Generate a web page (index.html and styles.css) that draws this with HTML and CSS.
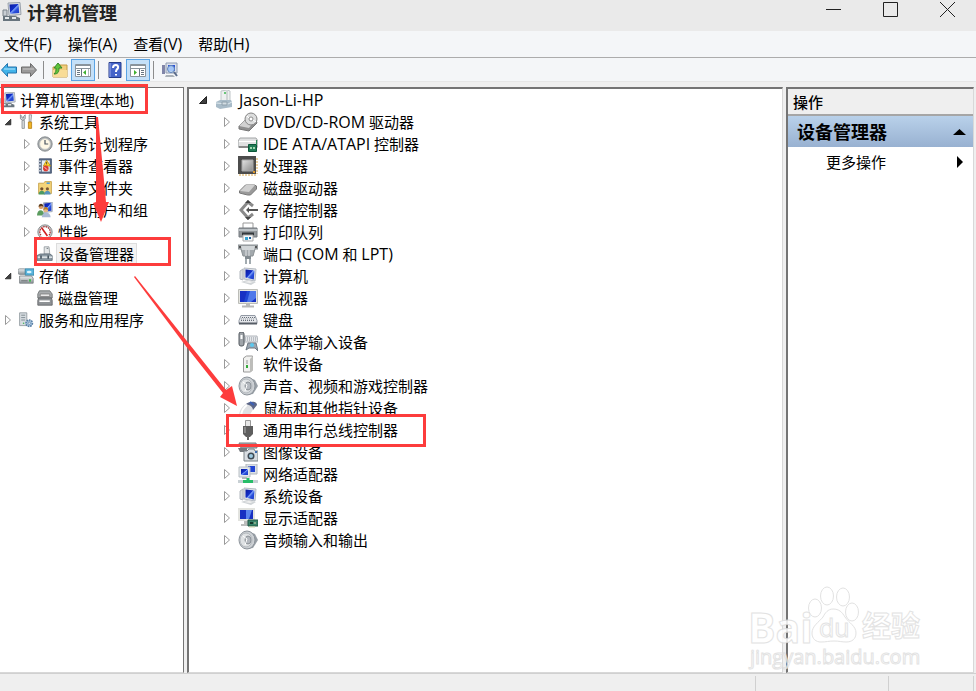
FILE: index.html
```html
<!DOCTYPE html>
<html lang="zh-CN">
<head>
  <meta charset="UTF-8">
  <meta name="viewport" content="width=device-width, initial-scale=1.0">
  <title>计算机管理</title>
  <link rel="stylesheet" href="styles.css">
</head>
<body>
  <!-- 图标定义 -->
  <svg class="icon-defs" aria-hidden="true">
    <defs>
      <linearGradient id="screen" x1="0" y1="0" x2="1" y2="1">
        <stop offset="0" stop-color="#0a1a98"/><stop offset="0.45" stop-color="#1230cc"/><stop offset="0.5" stop-color="#7fa4f8"/><stop offset="0.65" stop-color="#2a50dc"/><stop offset="1" stop-color="#1a38c4"/>
      </linearGradient>
      <linearGradient id="metal" x1="0" y1="0" x2="0" y2="1">
        <stop offset="0" stop-color="#eef0f1"/><stop offset="1" stop-color="#8b9296"/>
      </linearGradient>
      <linearGradient id="chip" x1="0" y1="0" x2="1" y2="1">
        <stop offset="0" stop-color="#e4e4e4"/><stop offset="1" stop-color="#8a8a8a"/>
      </linearGradient>
    </defs>
    <symbol id="i-closed" viewBox="0 0 8 12"><path d="M1.5 1.5v9l5-4.500z" fill="#fff" stroke="#9a9a9a"/></symbol>
    <symbol id="i-open" viewBox="0 0 10 10"><path d="M8.500 1.500v7h-7z" fill="#404040" stroke="#222"/></symbol>
    <symbol id="i-computer" viewBox="0 0 20 20">
      <path d="M6 1l12-.5 1 12-12 1z" fill="#d7dce2" stroke="#9aa2ac"/><path d="M7.500 2.500l9-.500.7 9-9 .8z" fill="url(#screen)"/>
      <path d="M10 13h4l1 2h-5z" fill="#aab0b6"/>
      <path d="M1 8h4v6H1z" fill="#c9ced3" stroke="#7a838b"/><path d="M1 14h12l5 2v3H1z" fill="#68747d"/><path d="M3 15h4v2H3zM10 15h4v2h-4z" fill="#e4e8ea"/>
    </symbol>
    <symbol id="i-pc" viewBox="0 0 20 20">
      <path d="M6 2l12 1-1 12-11-2z" fill="#dfe3e8" stroke="#b4bac2"/><path d="M7.500 3.500l9 1-.700 9-8.300-2z" fill="url(#screen)"/>
      <path d="M2 5l3-2v11l-3-1z" fill="#d8dcdf" stroke="#b2b8be"/><path d="M3 16l6-2 9 2-5 3z" fill="#cfd3d6"/><path d="M6 16l5-1 4 1-3 1z" fill="#f1f1f1"/>
    </symbol>
    <symbol id="i-tools" viewBox="0 0 20 20">
      <path d="M3 1v5l3 2 3-2V1L7 3v2H5V3z" fill="#dcdfe1" stroke="#7a8085"/><path d="M5 8h3v10H5z" fill="#d8dbde" stroke="#868c91"/>
      <path d="M14 1h3l-1 9h-2z" fill="#e7e9ea" stroke="#85898c"/><path d="M13 10h4v8h-4z" fill="#efb526" stroke="#b77d10"/>
    </symbol>
    <symbol id="i-clock" viewBox="0 0 20 20">
      <circle cx="10" cy="10" r="9" fill="#a9adb0" stroke="#777c80"/><circle cx="10" cy="10" r="6.500" fill="#fff8e6" stroke="#d5d5cf"/><path d="M10 5v5h4" fill="none" stroke="#4b5560" stroke-width="1.500"/>
    </symbol>
    <symbol id="i-event" viewBox="0 0 20 20">
      <path d="M3 1h15v18H3z" fill="#5c6d88" stroke="#3d4d68"/><path d="M6 3h10v14H6z" fill="#e8edf4"/><path d="M2 4h3M2 8h3M2 12h3M2 16h3" stroke="#c7cdd6" stroke-width="2"/>
      <path d="M12 3l5 7H8z" fill="#ffd633" stroke="#b88b00"/><path d="M12 5v3" stroke="#333"/><circle cx="11" cy="13" r="3.500" fill="#dc3d35"/><path d="M9.500 11.500l3 3" stroke="#fff"/>
    </symbol>
    <symbol id="i-share" viewBox="0 0 20 20">
      <path d="M2 4h6l2-2h8v15H2z" fill="#f4d47a" stroke="#c19b3d"/><path d="M12 4h4" stroke="#4b9cd8" stroke-width="2"/>
      <circle cx="6" cy="11" r="2" fill="#705030"/><path d="M2 18c0-6 8-6 8 0z" fill="#4d9a62"/><circle cx="13" cy="11" r="2" fill="#7a5838"/><path d="M9 18c0-6 8-6 8 0z" fill="#5793bc"/>
    </symbol>
    <symbol id="i-users" viewBox="0 0 20 20">
      <path d="M8 1l11-1v12l-10 1z" fill="#d8dde4" stroke="#8f9cae"/><path d="M9 2l9-1v10l-8 1z" fill="url(#screen)"/>
      <circle cx="5" cy="6" r="3" fill="#d9a06c"/><path d="M2 6c0-5 6-5 6 0l-2-1z" fill="#5b3c1c"/><path d="M0 17c0-9 9-9 9 0z" fill="#5b9c5f"/>
      <circle cx="11" cy="10" r="3" fill="#e5b684"/><path d="M8 10c0-5 6-5 6 0l-3-1z" fill="#b78228"/><path d="M6 19c0-8 11-8 11 0z" fill="#a9b9d4"/>
    </symbol>
    <symbol id="i-perf" viewBox="0 0 20 20">
      <circle cx="10" cy="10" r="9" fill="#c4c7c8" stroke="#7c8083"/><circle cx="10" cy="10" r="7" fill="#fff"/><path d="M5 14a6.500 6.500 0 1 1 10 0" fill="none" stroke="#a53030" stroke-width="1.500" stroke-dasharray="2 1"/><path d="M6 5l7 10" stroke="#d21e1e" stroke-width="2"/>
    </symbol>
    <symbol id="i-device" viewBox="0 0 20 20">
      <path d="M9 1h6l1 9H9z" fill="#e5e8e9" stroke="#8e9599"/><path d="M12 3h2" stroke="#5b6469"/><path d="M0 12l4-2h12l3 2v6H0z" fill="#8e9ca6" stroke="#596873"/><path d="M1 14h18" stroke="#dce2e5" stroke-width="2"/><path d="M5 12v4M14 12v4" stroke="#475661" stroke-width="2"/>
    </symbol>
    <symbol id="i-storage" viewBox="0 0 20 20">
      <rect x="0" y="1" width="10" height="7" rx="2" fill="url(#metal)" stroke="#858b8f"/><path d="M9 1h11v8H9z" fill="#58b4dc" stroke="#327e9f"/><ellipse cx="14" cy="5" rx="3" ry="1.500" fill="#d9f3fd"/>
      <path d="M2 10h15l2 3v6H2z" fill="url(#metal)" stroke="#777d81"/><path d="M4 16h8" stroke="#5c6266"/><rect x="14" y="14" width="2" height="3" fill="#27bd38"/>
    </symbol>
    <symbol id="i-disks" viewBox="0 0 20 20">
      <path d="M3 1h13l3 4v5H1V5z" fill="#a8abad" stroke="#66696b"/><path d="M4 5h12v3H4z" fill="#f4f4f4" stroke="#777"/><path d="M2 10h16l1 3v6H1v-6z" fill="#8f9396" stroke="#5d6062"/><path d="M3 14h13" stroke="#fff" stroke-width="2"/>
    </symbol>
    <symbol id="i-services" viewBox="0 0 20 20">
      <path d="M2 1h9v16H2z" fill="#d7dde1" stroke="#899298"/><path d="M4 4h5M4 7h5M4 10h5" stroke="#6f7b83"/><circle cx="7" cy="14" r="1" fill="#42b45a"/>
      <circle cx="14" cy="14" r="4" fill="#a8c6e2" stroke="#597fa4" stroke-width="2" stroke-dasharray="2 1"/><circle cx="14" cy="14" r="1.500" fill="#fff" stroke="#597fa4"/>
    </symbol>
    <symbol id="i-host" viewBox="0 0 20 20">
      <path d="M7 1l6-1 3 1v12H7z" fill="#eef0f0" stroke="#c0c6c8"/><path d="M13 1v11" stroke="#b4babb"/><circle cx="11" cy="3" r="1" fill="#3eb850"/><path d="M2 12l4-2h11l1 2v5l-12 2-4-2z" fill="#a8bbc8"/><path d="M2 13l12 1 4-2" stroke="#dfe9ee" fill="none"/><path d="M8 12h5v3H8z" fill="#d3dde3" stroke="#8ea0ac"/>
    </symbol>
    <symbol id="i-dvd" viewBox="0 0 20 20">
      <path d="M1 14l6-6h11l1 3-6 6-2 2-10-2z" fill="#8f8f8f" stroke="#777"/><path d="M1 14l6-6h10l-6 8z" fill="#d2d2d2"/><circle cx="13" cy="7" r="6" fill="#dcdddd" stroke="#858585"/><circle cx="13" cy="7" r="2" fill="#fff" stroke="#8d8d8d"/><path d="M9 4l2 2M15 8l3 2" stroke="#fff"/>
    </symbol>
    <symbol id="i-ide" viewBox="0 0 20 20">
      <path d="M2 4h16l2 3v6H0V7z" fill="#e0e1e2" stroke="#a2a5a6"/><path d="M1 7.500h18" stroke="#fff"/><path d="M1 13h9" stroke="#888" stroke-width="2"/><path d="M10.500 10.500h8v7h-8z" fill="#207c55" stroke="#0d573a"/><path d="M12 13h2v2h-2zM15 13h2v2h-2z" fill="#9fd7ae"/><path d="M18.500 6v5" stroke="#2a8a58"/>
    </symbol>
    <symbol id="i-cpu" viewBox="0 0 20 20">
      <path d="M1 19h17M19 2v16" stroke="#d8a64a" stroke-dasharray="2 1"/><path d="M0 0h18v18H0z" fill="#4c4c4c"/><path d="M4 4h11v11H4z" fill="url(#chip)" stroke="#a8a8a8"/><path d="M15 15h2v2h-2z" fill="#dc972b"/>
    </symbol>
    <symbol id="i-drive" viewBox="0 0 20 20">
      <path d="M1.500 13l6-6h9l2 1v3l-6 6h-3l-8-2z" fill="#9a9a9a" stroke="#777"/><path d="M2 13l6-6h9l-6 7z" fill="#d0d0d0"/>
    </symbol>
    <symbol id="i-controller" viewBox="0 0 20 20">
      <path d="M15 6l-5-4-7 8 7 8 5-4" fill="none" stroke="#8a8a8a" stroke-width="3"/><path d="M9 10h11" stroke="#555" stroke-width="2"/><path d="M7 3h6l-3-3zM7 17h6l-3 3z" fill="#444"/><path d="M8 10l3-3v6z" fill="#555"/>
    </symbol>
    <symbol id="i-printer" viewBox="0 0 20 20">
      <path d="M5 1h10v8H5z" fill="#fff" stroke="#999"/><path d="M1 6h18v9H1z" fill="#92979b" stroke="#757b80"/><path d="M1 8h18" stroke="#bcc2c6" stroke-width="2"/><path d="M4 12h12" stroke="#33383c" stroke-width="3"/><path d="M5 13h10v6H5z" fill="#f6f8fa" stroke="#aaa"/><path d="M7 15h3v3H7z" fill="#38a3d1"/><path d="M11 15h2v2h-2z" fill="#225f99"/>
    </symbol>
    <symbol id="i-port" viewBox="0 0 20 20">
      <path d="M0 1h20v4h-3l-2 7H5L3 5H0z" fill="#a3a9ad" stroke="#8b9194"/><path d="M3 2h14l-1 4H4z" fill="#d2d6d8"/><path d="M1 3h2M17 3h2" stroke="#555" stroke-width="2"/><path d="M7 12h6v3H7z" fill="#838b90"/><path d="M8 15v5M12 15v5" stroke="#a2abb0" stroke-width="2"/><path d="M8 6v6M11 6v6" stroke="#e2e4e6"/>
    </symbol>
    <symbol id="i-monitor" viewBox="0 0 20 20">
      <path d="M.500 1.500h19v14H.500z" fill="#e3e4e0" stroke="#bcbdb8"/><path d="M2 3h16v11H2z" fill="#1730c4"/><path d="M9 3h9v7l-5 4H9z" fill="#4f78ea"/><path d="M12 3l-3 11h-3l3-11z" fill="#2148d4"/><path d="M8 16h4v2H8z" fill="#bbb"/><path d="M4 18.500h12" stroke="#b8b8b8" stroke-width="2"/>
    </symbol>
    <symbol id="i-keyboard" viewBox="0 0 20 20">
      <path d="M3 5.500h14l2 5v3H1v-3z" fill="#e4e6ea" stroke="#9299a4"/><path d="M1 13.500h18" stroke="#565d66" stroke-width="2"/><path d="M4 7.500h13M3 10.500h14" stroke="#666e78" stroke-dasharray="1 1"/><path d="M3 9h13" stroke="#8d949d" stroke-dasharray="1 1"/>
    </symbol>
    <symbol id="i-hid" viewBox="0 0 20 20">
      <path d="M6 4h13l1 6H6z" fill="#e5e7ea" stroke="#b0b5bb"/><path d="M7 6h12M7 8h12" stroke="#8d959e" stroke-dasharray="1 1"/><rect x="1" y="0" width="5" height="14" rx="2" fill="#a0a5aa" stroke="#555b60"/><path d="M3.500 3v4" stroke="#fff" stroke-width="2"/>
      <path d="M8 18l2-7h8l2 8-3-3h-6z" fill="#9aa6b1" stroke="#6e7882"/><circle cx="14" cy="13" r="2" fill="#5cc8ee"/>
    </symbol>
    <symbol id="i-software" viewBox="0 0 20 20">
      <path d="M5.500 4l3-2h6v14l-2 2h-7z" fill="#f1f1ef" stroke="#999"/><path d="M12 5l3-3v14l-3 2z" fill="#bdbdba"/><path d="M8 7h2M8 9h2" stroke="#999"/><path d="M9 11v3" stroke="#35aa3b" stroke-width="2"/>
    </symbol>
    <symbol id="i-speaker" viewBox="0 0 20 20">
      <path d="M10 1l7 3 3 6-5 8-6 1z" fill="#9aa1a8"/><ellipse cx="9" cy="10" rx="8" ry="9" fill="#cdd1d5" stroke="#8b9299"/><ellipse cx="8" cy="10" rx="6" ry="7" fill="#dfe2e4" stroke="#b3b8bd"/><ellipse cx="10" cy="10" rx="3" ry="4" fill="#b4b9bf" stroke="#8c9298"/><path d="M5 6l4 3-2 6" stroke="#fff" fill="none"/>
    </symbol>
    <symbol id="i-mouse" viewBox="0 0 20 20">
      <path d="M1 18c0-6 4-11 9-13l6 5-5 8z" fill="#dfe1e4"/><path d="M8 6c4-3 11-3 11 1l-4 5c0-3-3-5-7-6z" fill="#5c6686"/><path d="M12 4l4 3" stroke="#3c5fb4" stroke-width="2"/><path d="M3 17c1-5 3-8 6-10" stroke="#fff" fill="none" stroke-width="2"/>
    </symbol>
    <symbol id="i-usb" viewBox="0 0 20 20">
      <path d="M7.500.500h5v6h-5z" fill="#e7e7e7" stroke="#999"/><path d="M5 6h10v8l-3 3H8l-3-3z" fill="#5e5e5e"/><path d="M7 7v6" stroke="#888" stroke-width="2"/><path d="M10 16v4" stroke="#666" stroke-width="2"/>
    </symbol>
    <symbol id="i-imaging" viewBox="0 0 20 20">
      <path d="M1 1h17l1 5H3z" fill="#aeb2b6" stroke="#777d82"/><path d="M0 6h9v4H2z" fill="#74797e"/><path d="M6 9h3l2-2h5l1 2h3v10H6z" fill="#d8dde2" stroke="#7b8287"/><circle cx="13" cy="14" r="3.500" fill="#3e4953"/><circle cx="13" cy="14" r="2" fill="#9ec9e0"/><path d="M17 10h2" stroke="#3d6cb1" stroke-width="2"/>
    </symbol>
    <symbol id="i-network" viewBox="0 0 20 20">
      <path d="M8 0h11v10H8z" fill="#dce1e6" stroke="#b1b7be"/><path d="M10 2h7v6h-7z" fill="#2245d4"/><path d="M1 3h11v10H1z" fill="#e4e8eb" stroke="#b8bfc5"/><path d="M3 5h7v6H3z" fill="url(#screen)"/><path d="M4 13h5v2H4z" fill="#b4b9bd"/><path d="M0 17.500h20" stroke="#c8d0d4" stroke-width="3"/><path d="M5 17.500h10M10 14v3" stroke="#27bd68" stroke-width="3"/>
    </symbol>
    <symbol id="i-display" viewBox="0 0 20 20">
      <path d="M0 0h17v13H0z" fill="#e2e3df"/><path d="M2 2h13v9H2z" fill="#1830c2"/><path d="M8 2h6l-3 9H8z" fill="#5a84ee"/><path d="M6 13h5v3H6zM3 16h8v2H3z" fill="#bcbebd"/><path d="M10 12h10v6H10z" fill="#39836a" stroke="#245a46"/><path d="M12 14h3v2h-3z" fill="#16382c"/><path d="M16 15h2M11 19h6" stroke="#d3d6ab"/>
    </symbol>
    <symbol id="i-back" viewBox="0 0 16 16"><path d="M.500 8l6-6.500v3.500h9v6h-9v3.500z" fill="#42b4ea" stroke="#2373ac"/><path d="M3 7h11" stroke="#b8e5fb"/></symbol>
    <symbol id="i-forward" viewBox="0 0 16 16"><path d="M15.500 8l-6-6.500v3.500h-9v6h9v3.500z" fill="#9a9a9a" stroke="#6c6c6c"/><path d="M2 7h11" stroke="#c8c8c8"/></symbol>
    <symbol id="i-folder" viewBox="0 0 16 16"><path d="M1 5h5l1-2h8v12H1z" fill="#f0ce7e" stroke="#c69b45"/><path d="M1 8h14v7H1z" fill="#f8dc98"/><path d="M2 12c4 0 5-2 5-6h3L6 1 2 6h2c0 3 0 4-2 6z" fill="#5ec43b" stroke="#35882a"/></symbol>
    <symbol id="i-pane-left" viewBox="0 0 16 16"><path d="M.500 2.500h15v12H.500z" fill="#fff" stroke="#8a949c"/><path d="M1 3.500h14M1 6.500h14" stroke="#89939b"/><path d="M6.500 7v7M2 8.500h3M2 10.500h3M2 12.500h3" stroke="#687681"/><path d="M11 8v5l-3-2.500z" fill="#3faf30"/><path d="M13.500 7v7" stroke="#b2b9be"/></symbol>
    <symbol id="i-pane-right" viewBox="0 0 16 16"><path d="M.500 2.500h15v12H.500z" fill="#fff" stroke="#8a949c"/><path d="M1 3.500h14M1 6.500h14" stroke="#89939b"/><path d="M9.500 7v7M11 8.500h3M11 10.500h3M11 12.500h3" stroke="#687681"/><path d="M4 8v5l3-2.500z" fill="#3faf30"/></symbol>
    <symbol id="i-help" viewBox="0 0 16 16"><path d="M2 .500h12v15H2z" fill="#4564c9" stroke="#253c8b"/><path d="M3 1v14" stroke="#9cacee"/><path d="M6 6c0-4 6-4 5 0-1 2-2 1-2 4M9 12v1.500" fill="none" stroke="#fff" stroke-width="2"/></symbol>
    <symbol id="i-scan" viewBox="0 0 16 16"><path d="M4 1h11v10H4z" fill="#dbe1ec" stroke="#8f9bb0"/><path d="M6 3h7v6H6z" fill="#2b50d6"/><path d="M0 3h3v9H0z" fill="#8085a8"/><path d="M4 13h7l2 2H3z" fill="#aab1b8"/><circle cx="9" cy="7" r="3.500" fill="#c3e2ff" fill-opacity=".8" stroke="#5d82b9"/><path d="M12 10l3 4" stroke="#5c6d8b" stroke-width="2"/></symbol>
  </svg>

  <div class="window">
    <header class="titlebar">
      <svg class="icon"><use href="#i-computer"/></svg>
      <h1 class="title">计算机管理</h1>
      <div class="controls">
        <button aria-label="最小化"><svg class="control"><path d="M0 9.500h15"/></svg></button>
        <button aria-label="最大化"><svg class="control"><path d="M.500 2.500h14v14H.500z"/></svg></button>
        <button aria-label="关闭"><svg class="control"><path d="M0 2l15 15M15 2L0 17"/></svg></button>
      </div>
    </header>

    <nav class="menubar">
      <button>文件<span class="latin">(F)</span></button>
      <button>操作<span class="latin">(A)</span></button>
      <button>查看<span class="latin">(V)</span></button>
      <button>帮助<span class="latin">(H)</span></button>
    </nav>

    <div class="toolbar">
      <button class="tool" aria-label="后退"><svg><use href="#i-back"/></svg></button>
      <button class="tool" aria-label="前进"><svg><use href="#i-forward"/></svg></button>
      <span class="separator"></span>
      <button class="tool" aria-label="向上"><svg><use href="#i-folder"/></svg></button>
      <button class="tool active" aria-label="控制台树"><svg><use href="#i-pane-left"/></svg></button>
      <span class="separator"></span>
      <button class="tool" aria-label="帮助"><svg><use href="#i-help"/></svg></button>
      <button class="tool active" aria-label="操作窗格"><svg><use href="#i-pane-right"/></svg></button>
      <span class="separator"></span>
      <button class="tool" aria-label="扫描"><svg><use href="#i-scan"/></svg></button>
    </div>

    <main class="panes">
      <!-- 控制台树 -->
      <ul class="pane tree console-tree">
        <li class="root"><svg class="icon"><use href="#i-computer"/></svg>计算机管理(本地)</li>
        <li><svg class="arrow"><use href="#i-open"/></svg><svg class="icon"><use href="#i-tools"/></svg>系统工具</li>
        <li class="child"><svg class="arrow"><use href="#i-closed"/></svg><svg class="icon"><use href="#i-clock"/></svg>任务计划程序</li>
        <li class="child"><svg class="arrow"><use href="#i-closed"/></svg><svg class="icon"><use href="#i-event"/></svg>事件查看器</li>
        <li class="child"><svg class="arrow"><use href="#i-closed"/></svg><svg class="icon"><use href="#i-share"/></svg>共享文件夹</li>
        <li class="child"><svg class="arrow"><use href="#i-closed"/></svg><svg class="icon"><use href="#i-users"/></svg>本地用户和组</li>
        <li class="child"><svg class="arrow"><use href="#i-closed"/></svg><svg class="icon"><use href="#i-perf"/></svg>性能</li>
        <li class="child"><svg class="arrow"></svg><svg class="icon"><use href="#i-device"/></svg><span class="selected">设备管理器</span></li>
        <li><svg class="arrow"><use href="#i-open"/></svg><svg class="icon"><use href="#i-storage"/></svg>存储</li>
        <li class="child"><svg class="arrow"></svg><svg class="icon"><use href="#i-disks"/></svg>磁盘管理</li>
        <li><svg class="arrow"><use href="#i-closed"/></svg><svg class="icon"><use href="#i-services"/></svg>服务和应用程序</li>
      </ul>

      <!-- 设备列表 -->
      <ul class="pane tree device-tree">
        <li><svg class="arrow"><use href="#i-open"/></svg><svg class="icon"><use href="#i-host"/></svg><span class="latin">Jason-Li-HP</span></li>
        <li class="child"><svg class="arrow"><use href="#i-closed"/></svg><svg class="icon"><use href="#i-dvd"/></svg><span><span class="latin">DVD/CD-ROM</span> 驱动器</span></li>
        <li class="child"><svg class="arrow"><use href="#i-closed"/></svg><svg class="icon"><use href="#i-ide"/></svg><span><span class="latin">IDE ATA/ATAPI</span> 控制器</span></li>
        <li class="child"><svg class="arrow"><use href="#i-closed"/></svg><svg class="icon"><use href="#i-cpu"/></svg>处理器</li>
        <li class="child"><svg class="arrow"><use href="#i-closed"/></svg><svg class="icon"><use href="#i-drive"/></svg>磁盘驱动器</li>
        <li class="child"><svg class="arrow"><use href="#i-closed"/></svg><svg class="icon"><use href="#i-controller"/></svg>存储控制器</li>
        <li class="child"><svg class="arrow"><use href="#i-closed"/></svg><svg class="icon"><use href="#i-printer"/></svg>打印队列</li>
        <li class="child"><svg class="arrow"><use href="#i-closed"/></svg><svg class="icon"><use href="#i-port"/></svg><span>端口 <span class="latin">(COM</span> 和 <span class="latin">LPT)</span></span></li>
        <li class="child"><svg class="arrow"><use href="#i-closed"/></svg><svg class="icon"><use href="#i-pc"/></svg>计算机</li>
        <li class="child"><svg class="arrow"><use href="#i-closed"/></svg><svg class="icon"><use href="#i-monitor"/></svg>监视器</li>
        <li class="child"><svg class="arrow"><use href="#i-closed"/></svg><svg class="icon"><use href="#i-keyboard"/></svg>键盘</li>
        <li class="child"><svg class="arrow"><use href="#i-closed"/></svg><svg class="icon"><use href="#i-hid"/></svg>人体学输入设备</li>
        <li class="child"><svg class="arrow"><use href="#i-closed"/></svg><svg class="icon"><use href="#i-software"/></svg>软件设备</li>
        <li class="child"><svg class="arrow"><use href="#i-closed"/></svg><svg class="icon"><use href="#i-speaker"/></svg>声音、视频和游戏控制器</li>
        <li class="child"><svg class="arrow"><use href="#i-closed"/></svg><svg class="icon"><use href="#i-mouse"/></svg>鼠标和其他指针设备</li>
        <li class="child"><svg class="arrow"><use href="#i-closed"/></svg><svg class="icon"><use href="#i-usb"/></svg>通用串行总线控制器</li>
        <li class="child"><svg class="arrow"><use href="#i-closed"/></svg><svg class="icon"><use href="#i-imaging"/></svg>图像设备</li>
        <li class="child"><svg class="arrow"><use href="#i-closed"/></svg><svg class="icon"><use href="#i-network"/></svg>网络适配器</li>
        <li class="child"><svg class="arrow"><use href="#i-closed"/></svg><svg class="icon"><use href="#i-pc"/></svg>系统设备</li>
        <li class="child"><svg class="arrow"><use href="#i-closed"/></svg><svg class="icon"><use href="#i-display"/></svg>显示适配器</li>
        <li class="child"><svg class="arrow"><use href="#i-closed"/></svg><svg class="icon"><use href="#i-speaker"/></svg>音频输入和输出</li>
      </ul>

      <!-- 操作窗格 -->
      <aside class="pane actions">
        <h2 class="actions-title">操作</h2>
        <button class="actions-group">设备管理器<svg class="caret"><path d="M0 10l6.500-6 6.500 6z"/></svg></button>
        <button class="actions-item">更多操作<svg class="caret"><path d="M4 1l6 6-6 6z"/></svg></button>
      </aside>
    </main>

    <footer class="statusbar">
      <span></span><span></span><span></span><span></span>
    </footer>
  </div>

  <!-- 水印 -->
  <div class="watermark">
    <span class="brand">Bai</span>
    <svg class="paw" viewBox="0 0 52 58">
      <ellipse cx="7" cy="22" rx="6.500" ry="9"/><ellipse cx="19" cy="10" rx="6.500" ry="9"/><ellipse cx="35" cy="11" rx="6.500" ry="9"/><ellipse cx="44" cy="26" rx="6.500" ry="9"/>
      <path d="M25 23c-5 0-8 4-10 8-4 5-11 9-11 16 0 6 4 9 9 9 5 0 8-1 13-1s8 1 12 1c6 0 10-3 10-9 0-7-7-10-11-16-3-5-6-8-12-8z"/>
    </svg>
    <span class="brand-du">du</span>
    <span class="brand-cn">经验</span>
    <span class="url">jingyan.baidu.com</span>
  </div>

  <!-- 标注 -->
  <svg class="marks" width="976" height="691" aria-hidden="true">
    <path class="box" d="M2.500 85.500h144v27h-144zM35.500 238.500h134v26h-134zM227.500 415.500h197v30h-197z"/>
    <path d="M96 117l2 0 8 85h3l-8 20-8-19 3-1z"/>
    <path d="M134 277l1-1 91 114 6-4 5 20-17-9 3-4-38-48z"/>
  </svg>
</body>
</html>
```

FILE: styles.css
```css
* { box-sizing: border-box; }
body {
  margin: 0;
  font-family: "Open Sans", "Noto Sans CJK SC", sans-serif;
  font-size: 15px;
  line-height: 22px;
  color: #000;
  position: relative;
}
svg { display: block; flex: none; }
button {
  padding: 0;
  border: 0;
  background: none;
  font: inherit;
  color: inherit;
}
.icon-defs {
  position: absolute;
  width: 0;
  height: 0;
}
.latin { font-size: 16px; }
.window {
  display: flex;
  flex-direction: column;
  min-height: 100vh;
  background: #efefef;
}

/* 标题栏 */
.titlebar {
  display: flex;
  gap: 5px;
  height: 31px;
  padding: 2px 20px 0 2px;
  background: #eaeaea;
}
.titlebar .icon {
  width: 20px;
  height: 20px;
}
.title {
  margin: 0;
  font-size: 18px;
  font-weight: 700;
  color: #222;
}
.controls {
  display: flex;
  align-items: flex-start;
  gap: 41px;
  margin: -2px 0 0 auto;
}
.control {
  width: 16px;
  height: 18px;
  fill: none;
  stroke: #222;
}

.menubar {
  display: flex;
  gap: 16px;
  height: 27px;
  padding: 2px 4px;
  background: #f4f6f8;
  border-bottom: 1px solid #acacac;
}

.toolbar {
  display: flex;
  align-items: center;
  gap: 2px;
  height: 24px;
  background: #f4f6f8;
  border-bottom: 1px solid #e6e6e6;
}
.tool {
  display: grid;
  place-items: center;
  width: 22px;
  height: 22px;
  border: 1px solid transparent;
}
.tool svg {
  width: 16px;
  height: 16px;
}
.tool:first-child { width: 16px; }
.tool.active {
  width: 24px;
  margin-left: -2px;
  background: #c4e0f8;
  border-color: #5ba4e4;
}
.separator {
  width: 1px;
  height: 18px;
  margin: 0 3px 0 1px;
  background: #8c8c8c;
}

/* 三个窗格 */
.panes {
  flex: 1;
  display: grid;
  grid-template-columns: 184px 1fr 188px;
  gap: 3px;
  padding: 5px 2px 0 0;
}
.pane {
  margin: 0;
  background: #fff;
  border-top: 2px solid #747474;
  border-left: 2px solid #747474;
  border-right: 1px solid #d8d8d8;
  border-bottom: 1px solid #d8d8d8;
}
.tree {
  padding: 0;
  list-style: none;
}
.tree li {
  display: flex;
  align-items: center;
  height: 22px;
  white-space: nowrap;
}
.console-tree {
  border-top-width: 1px;
  padding-top: 1px;
  border-left: 0;
  border-right-color: #747474;
}
.console-tree li { padding-left: 4px; }
.console-tree .root { padding-left: 0; }
.console-tree .root .icon { margin-right: 4px; }
.console-tree .child { padding-left: 23px; }
.console-tree .icon {
  width: 16px;
  height: 16px;
  margin-right: 5px;
}
.arrow { height: 12px; }
.console-tree .arrow {
  width: 8px;
  margin-right: 6px;
}
.selected {
  margin-left: -2px;
  padding: 0 2px;
  background: #f3f3f3;
  border: 1px solid #ddd;
  line-height: 20px;
}
.device-tree li { padding-left: 9px; }
.device-tree .child { padding-left: 33px; }
.device-tree .arrow {
  width: 10px;
  margin-right: 6px;
}
.device-tree .icon {
  width: 20px;
  height: 20px;
  margin-right: 5px;
}

.actions-title {
  margin: 0;
  height: 27px;
  padding: 2px 5px;
  background: #efefef;
  border-bottom: 2px solid #a6a6a6;
  font-size: 15px;
  font-weight: 500;
}
.actions button {
  display: flex;
  align-items: center;
  justify-content: space-between;
  width: 100%;
}
.actions .actions-group {
  height: 31px;
  padding: 0 6px 0 9px;
  background: linear-gradient(#b9d1ea, #98b1d1);
  font-size: 18px;
  font-weight: 700;
}
.actions .actions-item {
  height: 30px;
  padding: 0 6px 0 38px;
}
.caret {
  width: 14px;
  height: 14px;
}

.statusbar {
  display: grid;
  grid-template-columns: 1fr 133px 85px 3px;
  height: 18px;
  padding-top: 2px;
  border-top: 1px solid #d0d0d0;
}
.statusbar span + span { border-left: 1px solid #d0d0d0; }

/* 水印与标注 */
.watermark {
  position: absolute;
  left: 748px;
  top: 586px;
  width: 180px;
  height: 86px;
  color: #fff;
  -webkit-text-stroke: 1px #dedede;
  opacity: 0.85;
}
.watermark span,
.watermark svg { position: absolute; }
.brand {
  left: 0;
  top: 24px;
  font-size: 41px;
  line-height: 34px;
  font-weight: 700;
}
.paw {
  left: 60px;
  top: 0;
  width: 52px;
  height: 58px;
  fill: #fff;
  stroke: #dedede;
}
.brand-du {
  left: 71px;
  top: 27px;
  font-size: 25px;
  line-height: 28px;
}
.brand-cn {
  left: 114px;
  top: 20px;
  font-size: 29px;
  line-height: 40px;
  font-weight: 700;
}
.url {
  left: 2px;
  top: 60px;
  font-size: 20px;
  line-height: 22px;
}
.marks {
  position: absolute;
  left: 0;
  top: 0;
  fill: #fd3c3c;
  pointer-events: none;
}
.box {
  fill: none;
  stroke: #fd3c3c;
  stroke-width: 3;
}
```
